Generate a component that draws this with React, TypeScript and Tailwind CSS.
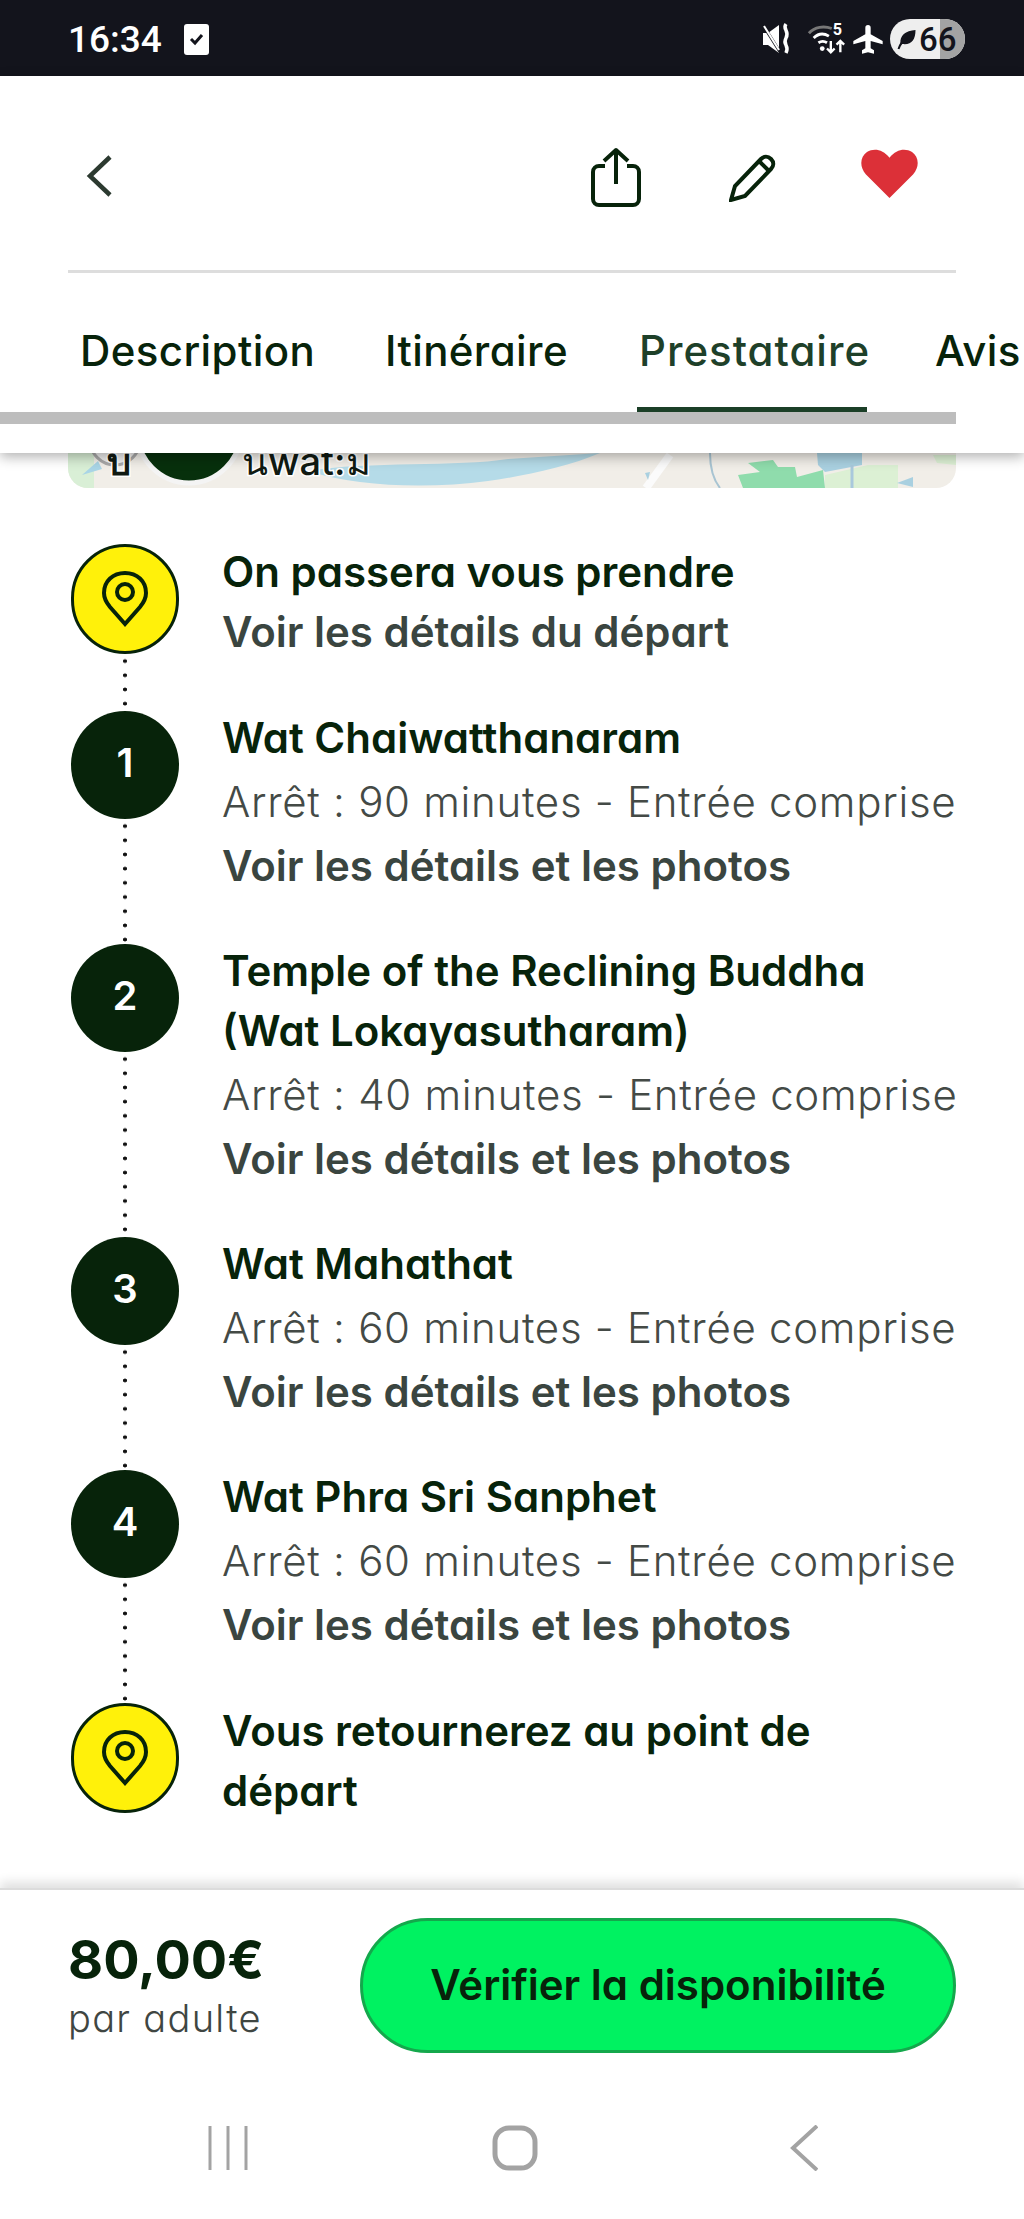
import React from 'react';

const font = 'font-["Inter","Noto_Sans",sans-serif] [font-feature-settings:"cv11"]';

type Stop = { mark: string | null; title: string[]; stop?: string; link?: string; last?: boolean };

const stops: Stop[] = [
  { mark: null, title: ['On passera vous prendre'], link: 'Voir les détails du départ' },
  { mark: '1', title: ['Wat Chaiwatthanaram'], stop: 'Arrêt : 90 minutes - Entrée comprise', link: 'Voir les détails et les photos' },
  { mark: '2', title: ['Temple of the Reclining Buddha', '(Wat Lokayasutharam)'], stop: 'Arrêt : 40 minutes - Entrée comprise', link: 'Voir les détails et les photos' },
  { mark: '3', title: ['Wat Mahathat'], stop: 'Arrêt : 60 minutes - Entrée comprise', link: 'Voir les détails et les photos' },
  { mark: '4', title: ['Wat Phra Sri Sanphet'], stop: 'Arrêt : 60 minutes - Entrée comprise', link: 'Voir les détails et les photos' },
  { mark: null, title: ['Vous retournerez au point de', 'départ'], last: true },
];

const PinIcon = () => (
  <svg width="46" height="56" viewBox="0 0 46 56" fill="none" stroke="#07230a" strokeWidth="4">
    <path d="M23 53 L8 36 C3 30 2 25 2 22 C2 10 11 2 23 2 C35 2 44 10 44 22 C44 25 43 30 38 36 Z" />
    <circle cx="23" cy="21" r="8" />
  </svg>
);

const StatusBar = () => (
  <div className="h-[76px] bg-[#13141c] flex items-center justify-between pl-[68px] pr-[59px] pt-[2px]">
    <div className="flex items-center gap-[22px]">
      <span className='text-white text-[37px] font-medium font-["Roboto",sans-serif] leading-none'>16:34</span>
      <span className="w-[25px] h-[31px] bg-white rounded-[3px] flex items-center justify-center">
        <svg width="15" height="13" viewBox="0 0 15 13" fill="none" stroke="#13141c" strokeWidth="3"><path d="M2 6l4 4 7-8" /></svg>
      </span>
    </div>
    <div className="flex items-center">
      <svg width="29" height="34" viewBox="0 0 29 34" fill="white">
        <path d="M1 11h5l11-8v28L6 23H1z" />
        <path d="M1 3l17 27" stroke="#13141c" strokeWidth="3" />
        <path d="M2 4l15 24" stroke="white" strokeWidth="2" />
        <path d="M24 2c-4 5 4 7 0 14s4 7 0 15" fill="none" stroke="white" strokeWidth="3.500" />
      </svg>
      <svg className="ml-[16px]" width="40" height="36" viewBox="0 0 42 36" fill="none" stroke="white">
        <path d="M2 12C8 5 18 4 26 7" stroke="#777777" strokeWidth="3" />
        <path d="M7 17c5-5 11-5 16-2" strokeWidth="3" />
        <path d="M12 22c3-2 6-2 9 0" strokeWidth="3" />
        <circle cx="16" cy="28" r="2.5" fill="white" stroke="none" />
        <path d="M25 20v12M21 28l4 4 4-4M35 32V20M31 24l4-4 4 4" strokeWidth="2.5" />
        <text x="27" y="14" fontSize="17" fontFamily="Roboto" fill="white" stroke="none" fontWeight="700">5</text>
      </svg>
      <svg className="ml-[5px]" width="32" height="34" viewBox="0 0 24 24" fill="white">
        <path d="M23 16v-2.5l-9-5V3.5a2 2 0 0 0-4 0v5l-9 5V16l9-2.500V19l-2.500 1.500V23l4.500-1 4.500 1v-2.500L14 19v-5.500z" />
      </svg>
      <div className="ml-[6px] relative w-[75px] h-[40px] rounded-full overflow-hidden flex items-center bg-[#eeeeee]">
        <div className="absolute right-0 top-0 bottom-0 w-[25px] bg-[#a3a3a3]" />
        <svg className="relative ml-[7px]" width="21" height="22" viewBox="0 0 20 22">
          <path d="M3 16C2 7 8 3 18 2c0 10-4 15-13 14" fill="#13141c" />
          <path d="M1 21c2-6 5-9 9-11" stroke="#13141c" strokeWidth="2" fill="none" />
        </svg>
        <span className='relative ml-[1px] text-[#13141c] text-[33px] font-medium font-["Roboto",sans-serif] leading-none'>66</span>
      </div>
    </div>
  </div>
);

const TopBar = () => (
  <div className="relative bg-white h-[377px] shadow-[0_4px_12px_rgba(0,0,0,0.3)] z-10 overflow-hidden">
    <div className="h-[197px] mx-[68px] border-b-[3px] border-[#dddddd] flex items-start">
      <svg className="ml-[18px] mt-[79px]" width="26" height="42" viewBox="0 0 26 42" fill="none" stroke="#2c3a30" strokeWidth="4.500">
        <path d="M24 2L4 21l20 19" />
      </svg>
      <div className="ml-auto mr-[38px] flex items-start">
        <svg className="mt-[71px]" width="50" height="60" viewBox="0 0 50 60" fill="none" stroke="#07230a" strokeWidth="4" strokeLinejoin="round">
          <path d="M14 19H8a6 6 0 0 0-6 6v27a6 6 0 0 0 6 6h34a6 6 0 0 0 6-6V25a6 6 0 0 0-6-6h-6" />
          <path d="M25 37V3M13 14L25 3l12 11" />
        </svg>
        <svg className="ml-[88px] mt-[78px]" width="48" height="48" viewBox="0 0 48 48" fill="none" stroke="#07230a" strokeWidth="4">
          <path d="M2 46l4-14L32 5c3-3 7-3 10 0s3 7 0 10L16 42z" />
          <path d="M30 7l11 11" />
        </svg>
        <svg className="ml-[84px] mt-[73px]" width="57" height="49" viewBox="0 0 58 50" fill="#dc3038">
          <path d="M29 50L5 26C-2 18-1 8 6 3c7-4 16-3 23 6 7-9 16-10 23-6 7 5 8 15 1 23z" />
        </svg>
      </div>
    </div>
    <div className={`relative h-[139px] text-[42px] font-medium text-[#07230a] tracking-[0.4px] ${font}`}>
      <div className="flex items-start pt-[52px] pl-[80px] whitespace-nowrap leading-[52px]">
        <span className="w-[305px] shrink-0">Description</span>
        <span className="w-[254px] shrink-0">Itinéraire</span>
        <span className="w-[296px] shrink-0 text-[#1e4029] tracking-[1px]">Prestataire</span>
        <span>Avis</span>
      </div>
      <div className="absolute left-[637px] top-[134px] w-[230px] h-[5px] bg-[#1b3f27]" />
    </div>
    <div className="w-[956px] h-[12px] bg-[#bdbdbd]" />
  </div>
);

const MapStrip = () => (
  <div className="mx-[68px] h-[35px] rounded-b-[20px] overflow-hidden">
    <svg width="888" height="35" viewBox="0 0 888 35">
      <rect width="888" height="35" fill="#f1eee8" />
      <rect width="26" height="35" fill="#d9efd6" />
      <path d="M14 22L30 8l4 8z" fill="#a9d5e6" />
      <path d="M240 18C300 8 390 14 440 6L532 0C500 14 450 24 420 28 360 36 290 34 240 18Z" fill="#b5dbe8" />
      <path d="M602 2L578 35" stroke="#fbfbfb" strokeWidth="8" />
      <path d="M577 20l5-1-2 8z" fill="#a9d0e0" />
      <path d="M642 0c0 12 2 25 10 35" stroke="#a8c4d2" strokeWidth="2" fill="none" />
      <path d="M757 35V22L800 12H830V35Z" fill="#dcf0d4" />
      <path d="M865 2H888V12L869 10Z" fill="#dcf0d4" />
      <path d="M680 10L705 7 710 14 727 14 729 24 755 17 757 35H675L670 22 692 19Z" fill="#8fdcac" />
      <path d="M749 0H794V12L757 19 750 12Z" fill="#a9d0e0" />
      <path d="M784 12V35" stroke="#a9c8dc" strokeWidth="3" />
      <path d="M829 30l16-6v10z" fill="#a9d0e0" />
      <circle cx="47" cy="-13" r="25" fill="#eeeeee" stroke="#a9a9a9" strokeWidth="3" />
      <text x="39" y="22" fontSize="38" fontFamily="Noto Sans, Inter" fontWeight="600" fill="#101a12" stroke="white" strokeWidth="3" paintOrder="stroke">บ</text>
      <text x="174" y="22" fontSize="38" fontFamily="Inter" fontWeight="500" fill="#101a12" stroke="white" strokeWidth="3" paintOrder="stroke">นwat:ม</text>
      <circle cx="121" cy="-22" r="52" fill="#07300c" stroke="#f4f4f4" strokeWidth="5" />
    </svg>
  </div>
);

const Timeline = () => (
  <div className={`px-[71px] pt-[56px] ${font}`}>
    {stops.map((s, i) => (
      <div key={i} className="flex">
        <div className="w-[108px] shrink-0 flex flex-col items-center">
          {s.mark ? (
            <div className="w-[108px] h-[108px] pb-[5px] rounded-full bg-[#07230a] flex items-center justify-center text-white text-[40px] font-semibold shrink-0">
              {s.mark}
            </div>
          ) : (
            <div className="w-[108px] h-[110px] rounded-full bg-[#fff10a] border-[3px] border-[#07230a] flex items-center justify-center shrink-0">
              <PinIcon />
            </div>
          )}
          {!s.last && (
            <div className="flex-1 w-[4px] bg-[radial-gradient(circle_at_center,#111111_1.700px,transparent_2.100px)] bg-[length:4px_14.200px] bg-repeat-y" />
          )}
        </div>
        <div className={`pl-[43px] ${s.mark ? '-mt-[3px]' : '-mt-[2px]'} pb-[49px] text-[42px]`}>
          {s.title.map((t) => (
            <div key={t} className="font-semibold text-[#07230a] whitespace-nowrap leading-[60px]">{t}</div>
          ))}
          {s.stop && <div className="font-light text-[#444a46] whitespace-nowrap leading-[68px] tracking-[0.7px]">{s.stop}</div>}
          {s.link && (
            <div className={`font-semibold text-[#3a4540] whitespace-nowrap ${s.stop ? 'leading-[59px]' : 'leading-[60px]'}`}>{s.link}</div>
          )}
        </div>
      </div>
    ))}
  </div>
);

const Footer = () => (
  <div className={`absolute left-0 right-0 top-[1888px] h-[331px] bg-white border-t-[2px] border-[#dcdcdc] shadow-[0_-6px_10px_rgba(0,0,0,0.12)] ${font}`}>
    <div className="flex items-start pl-[68px] pt-[28px]">
      <div className="w-[292px] pt-[11px]">
        <div className="text-[54px] font-bold text-[#07230a] leading-[62px]">80,00€</div>
        <div className="text-[38px] font-light text-[#3f4642] leading-[46px] mt-[4px] tracking-[1.300px]">par adulte</div>
      </div>
      <div className="w-[596px] h-[135px] pb-[3px] rounded-full bg-[#00f261] border-[3px] border-[#14a84c] flex items-center justify-center text-[42px] font-semibold text-[#07230a]">
        Vérifier la disponibilité
      </div>
    </div>
    <div className="flex items-center pl-[208px] mt-[72px]">
      <svg width="40" height="44" viewBox="0 0 40 44" stroke="#a3a3a3" strokeWidth="3"><path d="M2 0v44M20 0v44M38 0v44" /></svg>
      <svg className="ml-[244px]" width="46" height="46" viewBox="0 0 46 46" fill="none" stroke="#a3a3a3" strokeWidth="5"><rect x="3" y="3" width="40" height="40" rx="14" /></svg>
      <svg className="ml-[252px]" width="28" height="46" viewBox="0 0 28 46" fill="none" stroke="#a3a3a3" strokeWidth="4"><path d="M27 1L3 23l24 22" /></svg>
    </div>
  </div>
);

export default function App() {
  return (
    <div className="relative w-[1024px] h-[2219px] bg-white overflow-hidden">
      <StatusBar />
      <TopBar />
      <MapStrip />
      <Timeline />
      <Footer />
    </div>
  );
}
